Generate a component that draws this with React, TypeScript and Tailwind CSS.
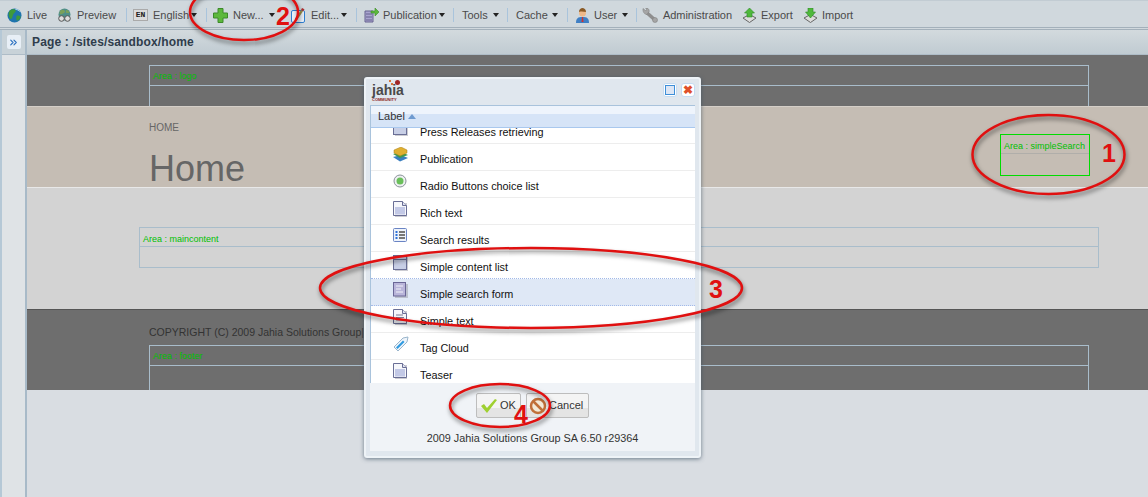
import React from 'react';
import { ChevronsRight } from 'lucide-react';

const Arrow = ({ className }: { className: string }) => <span className={`w-0 h-0 mr-[1px] border-l-[3px] border-r-[3px] border-t-[4px] border-l-transparent border-r-transparent border-t-[#222] ${className}`} />;
const Sep = ({ className }: { className: string }) => <span className={`w-px h-[14px] bg-[#a9c4dc] ${className}`} />;

const Globe = () => (
  <svg width="15" height="15" viewBox="0 0 15 15" className="block">
    <circle cx="7.500" cy="7.500" r="7" fill="#1f74ad" />
    <path d="M2.500 3c2-2.500 5-2 6-1s-1 3-2 4-1 5-2.500 5S.5 6 2.500 3z" fill="#3f9a3a" />
    <path d="M10 7.500c2 0 4 .5 3.500 2s-2.500 3.500-3.500 3-1-4.500 0-5z" fill="#3f9a3a" />
    <path d="M8.500 1.500c2 0 3 .5 4 2" stroke="#bfe3f5" fill="none" />
  </svg>
);
const PreviewIcon = () => (
  <svg width="15" height="15" viewBox="0 0 15 15" className="block">
    <circle cx="7.500" cy="6.500" r="6" fill="#4f8f8a" />
    <path d="M3 3c2-2 4-1 5 0s-1 2-3 3-3 0-2-3z" fill="#7aa05a" />
    <path d="M9 2c2 0 3 1 3.500 3L9 5z" fill="#7aa05a" />
    <circle cx="4.500" cy="10.500" r="2.800" fill="#ddd" stroke="#555" />
    <circle cx="10.500" cy="10.500" r="2.800" fill="#ddd" stroke="#555" />
  </svg>
);
const Plus = () => (
  <svg width="15" height="15" viewBox="0 0 15 15" className="block">
    <path d="M5 .5h5v4.500h4.500v5H10v4.500H5V10H.5V5H5z" fill="#5cb83c" stroke="#3d8a2a" />
  </svg>
);
const EditIcon = () => (
  <svg width="15" height="15" viewBox="0 0 15 15" className="block">
    <rect x=".5" y="2.500" width="13" height="12" rx="1.500" fill="#e9f1fa" stroke="#2f7fd0" />
    <path d="M4 11l6-9 2 1.200-6 9z" fill="#9a8f4a" />
    <path d="M10 2l1-2 2.500 1.300-1.300 2z" fill="#b03030" />
  </svg>
);
const PubIcon = () => (
  <svg width="15" height="15" viewBox="0 0 15 15" className="block">
    <path d="M1 3h8v11H1z" fill="#a9a4cf" stroke="#66628f" />
    <path d="M2 6h6M2 9h6M2 12h6" stroke="#66628f" />
    <path d="M7 3h4V0l4 4-4 4V5H7z" fill="#5cb83c" stroke="#3d8a2a" strokeWidth="0.6" />
  </svg>
);
const UserIcon = () => (
  <svg width="15" height="15" viewBox="0 0 15 15" className="block">
    <path d="M1 15c0-5 2-6 6.500-6s6.500 1 6.500 6z" fill="#3f7fc4" />
    <path d="M7 9h1l.5 5h-2z" fill="#d03030" />
    <circle cx="7.500" cy="5" r="3.500" fill="#eeb98a" />
    <path d="M4 4c0-3 2-4 3.500-4S11 1 11 4c-2 0-4-1-7 0z" fill="#8a5a25" />
  </svg>
);
const Wrench = () => (
  <svg width="16" height="15" viewBox="0 0 16 15" className="block">
    <path d="M3.500 3.500L13 12" stroke="#8e8e8e" strokeWidth="3.500" />
    <path d="M1 .5l2.500 2L5 1.500 3.500.2c2-.5 3.500.5 3.800 3L5 6.500C2.500 6.500.5 4 1 .5z" fill="#a5a5a5" stroke="#7a7a7a" strokeWidth="0.5" />
    <circle cx="13" cy="12" r="2.500" fill="#a5a5a5" stroke="#7a7a7a" strokeWidth="0.5" />
  </svg>
);
const BoxUp = () => (
  <svg width="15" height="15" viewBox="0 0 15 15" className="block">
    <path d="M1 10l6.500-3.500L14 10l-6.500 4.500z" fill="#dcdcdc" stroke="#666" />
    <path d="M5 9V5H2.500l5-5 5 5H10v4z" fill="#4fb83c" stroke="#2f8a2a" strokeWidth="0.6" />
  </svg>
);
const BoxDown = () => (
  <svg width="15" height="15" viewBox="0 0 15 15" className="block">
    <path d="M1 10l6.500-3.500L14 10l-6.500 4.500z" fill="#dcdcdc" stroke="#666" />
    <path d="M5 0v4H2.500l5 6 5-6H10V0z" fill="#4fb83c" stroke="#2f8a2a" strokeWidth="0.6" />
  </svg>
);
const Doc = ({ lines }: { lines?: boolean }) => (
  <svg width="15" height="16" viewBox="0 0 15 16" className="block">
    <path d="M2 2h12v14H2z" fill="#9a9aa5" opacity="0.5" />
    <path d="M.5.5h9l4 4v10H.5z" fill="#f6f7fb" stroke="#6a6f96" />
    <path d="M9.500.5v4h4" fill="#dfe2f0" stroke="#6a6f96" />
    {lines ? <path d="M3 6h7M3 8.500h8M3 11h8" stroke="#7a7a95" /> : <rect x="2" y="6" width="10" height="7.500" fill="#c3c9e6" />}
  </svg>
);
const ContentList = () => (
  <svg width="15" height="16" viewBox="0 0 15 16" className="block">
    <rect x="2" y="2" width="13" height="14" fill="#9a9aa5" opacity="0.5" />
    <rect x=".5" y=".5" width="13" height="14" fill="#c8cfe6" stroke="#6a6f96" />
    <path d="M1 4.500h12" stroke="#6a6f96" />
  </svg>
);
const Books = () => (
  <svg width="16" height="15" viewBox="0 0 16 15" className="block">
    <path d="M0 10l8-2 7 3-8 3.500z" fill="#3a7fc0" />
    <path d="M0 7l8-2 7 3-8 3z" fill="#3d9a50" />
    <path d="M1 3l7-3 6 3v3l-7 3-6-3z" fill="#e0b030" stroke="#a87f18" strokeWidth="0.5" />
  </svg>
);
const Radio = () => (
  <svg width="15" height="15" viewBox="0 0 15 15" className="block">
    <circle cx="7" cy="7" r="6" fill="#eef0f2" stroke="#8a9299" />
    <circle cx="7" cy="7" r="3.500" fill="#6abf5a" />
  </svg>
);
const ListIcon = () => (
  <svg width="15" height="15" viewBox="0 0 15 15" className="block">
    <rect x=".5" y=".5" width="13" height="13" rx="1" fill="#eef3fb" stroke="#6a84c4" />
    <path d="M6 4h6M6 7h6M6 10h6" stroke="#777" strokeWidth="1.800" />
    <path d="M2.500 4h2M2.500 7h2M2.500 10h2" stroke="#2f72d8" strokeWidth="1.800" />
  </svg>
);
const SearchForm = () => (
  <svg width="15" height="16" viewBox="0 0 15 16" className="block">
    <rect x="2" y="2" width="13" height="14" fill="#9a9aa5" opacity="0.5" />
    <rect x=".5" y=".5" width="12" height="13.500" fill="#b9b5da" stroke="#6a6696" />
    <path d="M3 4h7M3 7h5M3 10h7" stroke="#f2f2f8" strokeWidth="1.200" />
  </svg>
);
const Tag = () => (
  <svg width="16" height="16" viewBox="0 0 16 16" className="block">
    <path d="M1 11L10 2l5-1-1 5-9 9z" fill="#eef4fa" stroke="#9ab5cc" />
    <path d="M3 11.500L10 4.500l1.500 1.500L4.500 13z" fill="#2f9ae0" />
  </svg>
);
const Check = () => (
  <svg width="18" height="16" viewBox="0 0 18 16" className="block">
    <path d="M1 8l3-2 3 4 8-9 2 1-10 13z" fill="#9fd030" />
  </svg>
);
const NoEntry = () => (
  <svg width="18" height="18" viewBox="0 0 18 18" className="block">
    <circle cx="9" cy="9" r="7" fill="#f3ead8" stroke="#c0703a" strokeWidth="2.500" />
    <path d="M4 4l10 10" stroke="#c0703a" strokeWidth="2.500" />
  </svg>
);

const rows = [
  { label: 'Press Releases retrieving', icon: <ContentList /> },
  { label: 'Publication', icon: <Books /> },
  { label: 'Radio Buttons choice list', icon: <Radio /> },
  { label: 'Rich text', icon: <Doc /> },
  { label: 'Search results', icon: <ListIcon /> },
  { label: 'Simple content list', icon: <ContentList />, beforeSelected: true },
  { label: 'Simple search form', icon: <SearchForm />, selected: true },
  { label: 'Simple text', icon: <Doc lines /> },
  { label: 'Tag Cloud', icon: <Tag /> },
  { label: 'Teaser', icon: <Doc /> },
];

const Area = ({ label, className }: { label: string; className: string }) => (
  <div className={`border border-b-0 border-[#a9bdcb] ${className}`}>
    <div className="h-[20px] border-b border-[#a9bdcb] pl-[3px] pt-[5px] text-[9px] leading-[11px] text-[#00c000]">{label}</div>
  </div>
);

function Dialog() {
  return (
    <div className="absolute left-[364px] top-[77px] w-[337px] h-[381px] bg-[#e0e7ee] border-2 border-[#eef3f7] rounded-[3px] shadow-[0_1px_4px_rgba(60,80,100,0.7)] px-[4px] flex flex-col">
      <div className="h-[26px] shrink-0 flex items-start justify-between pl-[2px]">
        <div className="relative w-[32px] h-[24px]">
          <span className="absolute left-0 top-[4px] text-[14px] leading-[15px] font-bold text-[#4a4a4a]">jahia</span>
          <span className="absolute left-[23px] top-[1px] w-[5px] h-[5px] rounded-full bg-[#a02525]" />
          <span className="absolute left-[19px] top-[4px] w-[2px] h-[2px] bg-[#d9763a]" />
          <span className="absolute left-[17px] top-[1px] w-[2px] h-[2px] bg-[#d9763a]" />
          <span className="absolute left-0 top-[19px] text-[4px] leading-[4px] font-bold text-[#8a2020]">COMMUNITY</span>
        </div>
        <div className="flex gap-[4px] pt-[4px]">
          <span className="w-[14px] h-[14px] rounded-[3px] bg-white border border-[#c5dcf2] flex items-center justify-center">
            <span className="w-[10px] h-[10px] border border-[#3d8fd8] bg-[#dce6f5]" />
          </span>
          <span className="w-[14px] h-[14px] rounded-[3px] bg-white border border-[#c5dcf2] flex items-center justify-center text-[#e0502a] text-[12px] leading-none font-bold">✖</span>
        </div>
      </div>
      <div className="h-[278px] shrink-0 border-t border-l border-[#a9c3dc] bg-white overflow-hidden flex flex-col">
        <div className="h-[22px] shrink-0 bg-[linear-gradient(#eef4fc_0,#eef4fc_40%,#d6e4f7_40%,#d6e4f7_100%)] border-b border-[#a9c8ee] pl-[7px] flex items-center gap-[3px] text-[11px] text-[#333] z-10">
          Label
          <span className="w-0 h-0 border-l-[4px] border-r-[4px] border-b-[5px] border-l-transparent border-r-transparent border-b-[#6f9bd0]" />
        </div>
        <div className="-mt-[11px]">
          {rows.map((row) => (
            <div
              key={row.label}
              className={`h-[27px] flex text-[10.850px] text-[#111] border-b ${row.selected ? 'bg-[#dfe8f6] border-dotted border-[#a3bae9]' : row.beforeSelected ? 'border-dotted border-[#a3bae9]' : 'border-[#ededed]'}`}
            >
              <span className="w-[22px] shrink-0" />
              <span className="w-[27px] shrink-0 pt-[3px]">{row.icon}</span>
              <span className="pt-[8px] leading-[14px]">{row.label}</span>
            </div>
          ))}
        </div>
      </div>
      <div className="h-[68px] shrink-0 bg-[#f0f3f7] flex flex-col items-center">
        <div className="flex gap-[5px] pt-[10px]">
          <div className="w-[45px] h-[25px] border border-[#bdbdbd] rounded-[2px] bg-[linear-gradient(#f4f4f4_0,#f4f4f4_60%,#e4e4e4_60%,#e4e4e4_100%)] flex items-center pl-[3px] gap-[2px] text-[11px] text-[#333]">
            <Check />
            OK
          </div>
          <div className="w-[63px] h-[25px] border border-[#bdbdbd] rounded-[2px] bg-[linear-gradient(#f4f4f4_0,#f4f4f4_60%,#e4e4e4_60%,#e4e4e4_100%)] flex items-center pl-[2px] gap-[2px] text-[11px] text-[#333]">
            <NoEntry />
            Cancel
          </div>
        </div>
        <div className="mt-[14px] text-[10.850px] leading-[12px] text-[#333]">2009 Jahia Solutions Group SA 6.50 r29364</div>
      </div>
    </div>
  );
}

export default function App() {
  return (
    <div className="relative w-[1148px] h-[497px] overflow-hidden bg-[#d9dde2] font-['Liberation_Sans',Arial,sans-serif]">
      {/* toolbar */}
      <div className="h-[30px] bg-[#d0d8dd] border-t border-[#c2ccd3] border-b-[3px] border-double border-b-[#a3b0ba] pt-[2px] flex items-center text-[11px] text-[#4a4a4a] whitespace-nowrap">
        <span className="ml-[7px]"><Globe /></span>
        <span className="ml-[5px] w-[20px]">Live</span>
        <span className="ml-[10px]"><PreviewIcon /></span>
        <span className="ml-[5px] w-[40px]">Preview</span>
        <Sep className="ml-[9px]" />
        <span className="ml-[6px] w-[15px] h-[12px] bg-[#dcdcdc] border border-[#aaa] text-[8px] leading-[10px] font-bold text-center text-[#222] font-['Liberation_Mono',monospace]">EN</span>
        <span className="ml-[5px] w-[35px]">English</span>
        <Arrow className="ml-[3px]" />
        <Sep className="ml-[8px]" />
        <span className="ml-[6px]"><Plus /></span>
        <span className="ml-[5px] w-[32px]">New...</span>
        <Arrow className="ml-[4px]" />
        <span className="ml-[15px]"><EditIcon /></span>
        <span className="ml-[5px] w-[26px]">Edit...</span>
        <Arrow className="ml-[4px]" />
        <Sep className="ml-[8px]" />
        <span className="ml-[7px]"><PubIcon /></span>
        <span className="ml-[4px] w-[51px]">Publication</span>
        <Arrow className="ml-[5px]" />
        <Sep className="ml-[7px]" />
        <span className="ml-[8px] w-[27px]">Tools</span>
        <Arrow className="ml-[4px]" />
        <Sep className="ml-[7px]" />
        <span className="ml-[8px] w-[31px]">Cache</span>
        <Arrow className="ml-[5px]" />
        <Sep className="ml-[8px]" />
        <span className="ml-[7px]"><UserIcon /></span>
        <span className="ml-[4px] w-[24px]">User</span>
        <Arrow className="ml-[4px]" />
        <Sep className="ml-[7px]" />
        <span className="ml-[5px]"><Wrench /></span>
        <span className="ml-[5px] w-[68px] tracking-[-0.05px]">Administration</span>
        <span className="ml-[11px]"><BoxUp /></span>
        <span className="ml-[4px] w-[31px]">Export</span>
        <span className="ml-[11px]"><BoxDown /></span>
        <span className="ml-[4px]">Import</span>
      </div>

      <div className="flex">
        {/* collapsed rail */}
        <div className="w-[27px] h-[467px] shrink-0 border-l-2 border-r-2 border-l-[#b5c8d6] border-r-[#a8bac8] bg-[#dfe3e6]">
          <div className="h-[25px] bg-[#c8d2d8] flex items-center justify-center border-b border-[#aebcc7]">
            <span className="w-[14px] h-[14px] rounded-[2px] bg-[#e8eff6] flex items-center justify-center">
              <ChevronsRight size={11} strokeWidth={2.5} className="text-[#2a6fc0]" />
            </span>
          </div>
        </div>

        <div className="flex-1 flex flex-col">
          <div className="h-[25px] bg-[linear-gradient(#d3dade,#c0cbd2)] border-b border-[#aebcc7] pl-[5px] flex items-center text-[12px] tracking-[0.15px] font-bold text-[#2f3d4c]">
            Page : /sites/sandbox/home
          </div>

          <div className="h-[51px] bg-[#6e6e6e] pt-[10px] pl-[122px] overflow-hidden">
            <Area label="Area : logo" className="w-[940px] h-[41px]" />
          </div>

          <div className="h-[81px] bg-[#c5bdb4] border-t border-[#d5cfc8] flex justify-between">
            <div className="pl-[122px] pt-[15px] text-[#666]">
              <div className="text-[10px] leading-[12px]">HOME</div>
              <div className="mt-[15px] text-[36px] leading-[40px]">Home</div>
            </div>
            <div className="mt-[27px] mr-[58px] w-[90px] h-[42px] border border-[#00dc00]">
              <div className="h-[19px] border-b border-[#b0aeaa] pl-[3px] pt-[6px] text-[9px] leading-[11px] text-[#00c000]">Area : simpleSearch</div>
            </div>
          </div>

          <div className="h-[122px] bg-[#d3d3d3] border-t border-[#e8e8e8] pt-[39px] pl-[112px]">
            <div className="w-[960px] h-[41px] border border-[#a9bdcb]">
              <div className="h-[19px] border-b border-[#a9bdcb] pl-[3px] pt-[6px] text-[9px] leading-[11px] text-[#00c000]">Area : maincontent</div>
            </div>
          </div>

          <div className="h-[81px] bg-[#6e6e6e] border-t border-[#555] pl-[122px] pt-[16px] overflow-hidden">
            <div className="text-[10.500px] leading-[12px] text-[#333]">COPYRIGHT (C) 2009 Jahia Solutions Group|</div>
            <Area label="Area : footer" className="mt-[7px] w-[940px] h-[46px]" />
          </div>
        </div>
      </div>

      <Dialog />

      {/* red hand drawn annotations */}
      <svg className="absolute inset-0 pointer-events-none" width="1148" height="497" viewBox="0 0 1148 497" fill="none">
        <g stroke="#e01010" strokeWidth="2.500" style={{ filter: 'drop-shadow(1px 3px 2px rgba(0,0,0,0.5))' }}>
          <ellipse cx="1048.500" cy="154.500" rx="76" ry="39.500" />
          <ellipse cx="244" cy="12" rx="54" ry="28" />
          <ellipse cx="531" cy="288" rx="211" ry="40" />
          <ellipse cx="500" cy="405.500" rx="50" ry="21.500" />
        </g>
      </svg>
      <span className="absolute left-[1102px] top-[140px] text-[25px] leading-[26px] font-bold text-[#e01010]">1</span>
      <span className="absolute left-[276px] top-[3px] text-[25px] leading-[26px] font-bold text-[#e01010]">2</span>
      <span className="absolute left-[709px] top-[276px] text-[25px] leading-[26px] font-bold text-[#e01010]">3</span>
      <span className="absolute left-[514px] top-[401px] text-[25px] leading-[26px] font-bold text-[#e01010]">4</span>
    </div>
  );
}
